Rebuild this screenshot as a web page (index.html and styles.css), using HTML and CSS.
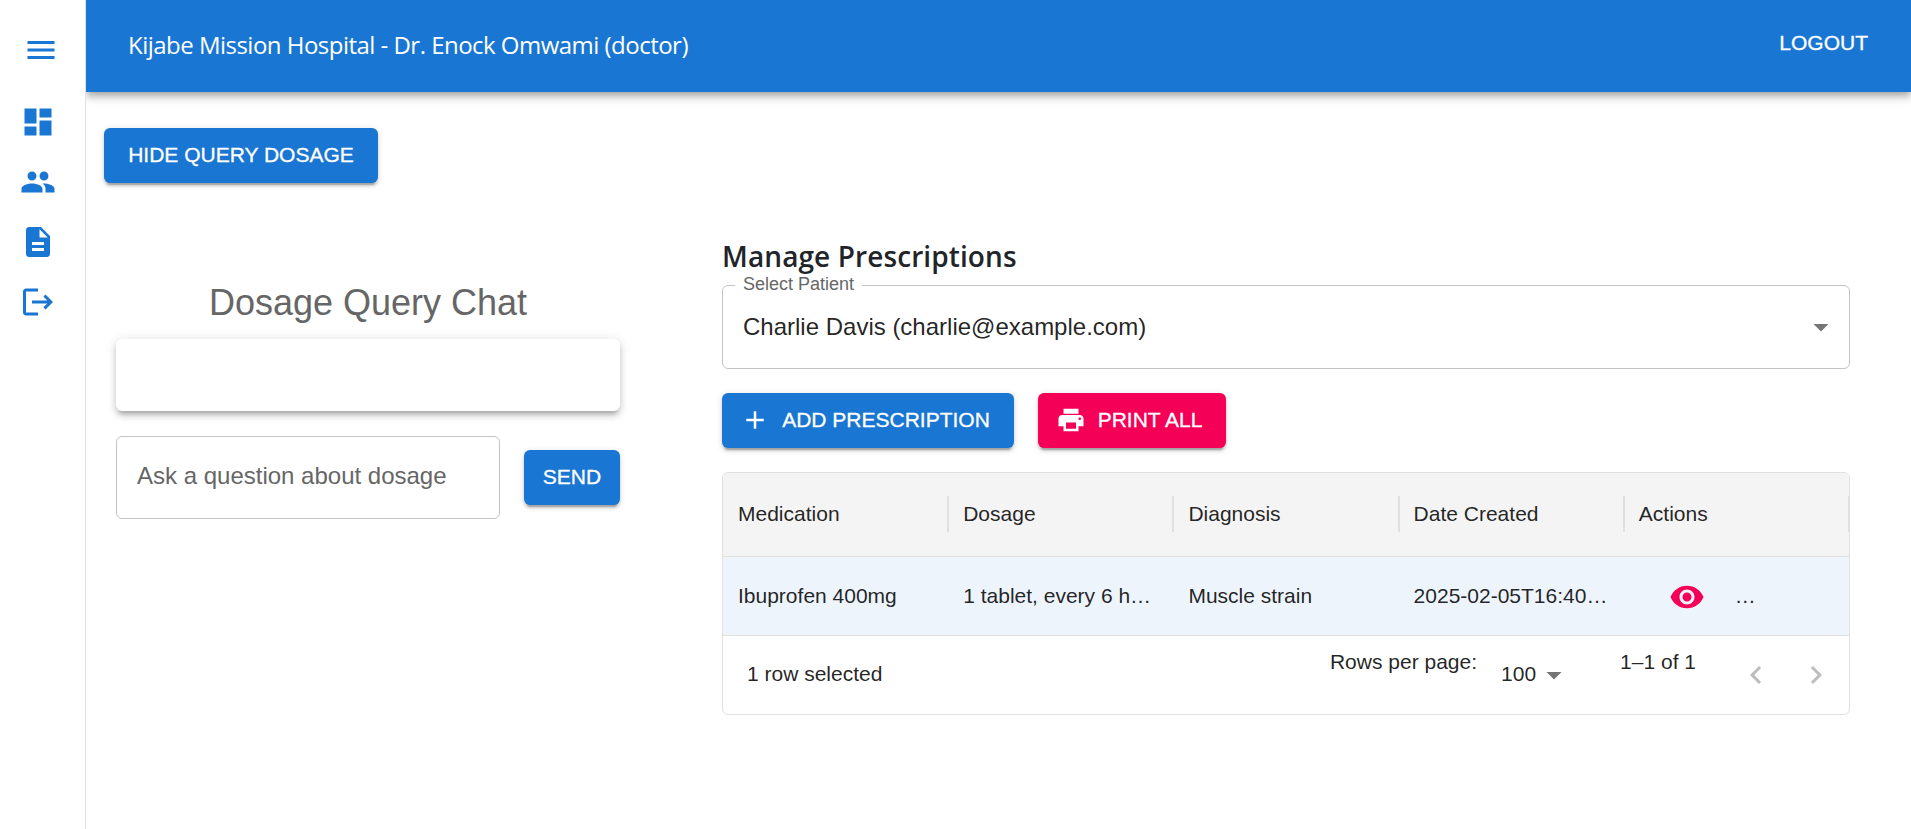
FILE: index.html
```html
<!DOCTYPE html>
<html lang="en">
<head>
<meta charset="utf-8">
<title>Manage Prescriptions</title>
<link rel="stylesheet" href="styles.css">
</head>
<body>
<div class="app">
  <nav class="sidebar">
    <svg class="icon menu" viewBox="0 0 24 24"><path d="M3 18h18v-2H3v2zm0-5h18v-2H3v2zm0-7v2h18V6H3z"/></svg>
    <svg class="icon" viewBox="0 0 24 24"><path d="M3 13h8V3H3v10zm0 8h8v-6H3v6zm10 0h8V11h-8v10zm0-18v6h8V3h-8z"/></svg>
    <svg class="icon" viewBox="0 0 24 24"><path d="M16 11c1.66 0 2.99-1.34 2.99-3S17.66 5 16 5c-1.66 0-3 1.34-3 3s1.34 3 3 3zm-8 0c1.66 0 2.99-1.34 2.99-3S9.66 5 8 5C6.34 5 5 6.34 5 8s1.34 3 3 3zm0 2c-2.33 0-7 1.17-7 3.5V19h14v-2.500c0-2.330-4.670-3.500-7-3.500zm8 0c-.29 0-.62.02-.97.05 1.160.84 1.970 1.970 1.970 3.450V19h6v-2.500c0-2.330-4.670-3.500-7-3.500z"/></svg>
    <svg class="icon" viewBox="0 0 24 24"><path d="M14 2H6c-1.100 0-1.990.9-1.990 2L4 20c0 1.100.89 2 1.990 2H18c1.100 0 2-.9 2-2V8l-6-6zm2 16H8v-2h8v2zm0-4H8v-2h8v2zm-3-5V3.500L18.500 9H13z"/></svg>
    <svg class="icon" viewBox="0 0 24 24"><path d="M17 7l-1.410 1.410L18.170 11H8v2h10.170l-2.580 2.580L17 17l5-5zM4 5h8V3H4c-1.100 0-2 .9-2 2v14c0 1.100.9 2 2 2h8v-2H4V5z"/></svg>
  </nav>
  <div class="page">
    <header class="appbar">
      <span class="title">Kijabe Mission Hospital - Dr. Enock Omwami (doctor)</span>
      <span class="logout">LOGOUT</span>
    </header>
    <main class="main">
      <button class="btn toggle"><span>HIDE QUERY DOSAGE</span></button>
      <div class="columns">
        <section class="chat">
          <h5 class="chat-title"><span>Dosage Query Chat</span></h5>
          <div class="paper"></div>
          <div class="ask">
            <div class="field"><span>Ask a question about dosage</span></div>
            <button class="btn send">SEND</button>
          </div>
        </section>
        <section class="manage">
          <h2 class="manage-title"><span>Manage Prescriptions</span></h2>
          <div class="select">
            <span class="select-label">Select Patient</span>
            <span class="select-value">Charlie Davis (charlie@example.com)</span>
            <svg class="icon grey" viewBox="0 0 24 24"><path d="M7 10l5 5 5-5z"/></svg>
          </div>
          <div class="actions">
            <button class="btn add"><svg class="bicon" viewBox="0 0 24 24"><path d="M19 13h-6v6h-2v-6H5v-2h6V5h2v6h6v2z"/></svg><span>ADD PRESCRIPTION</span></button>
            <button class="btn print"><svg class="bicon" viewBox="0 0 24 24"><path d="M19 8H5c-1.660 0-3 1.340-3 3v6h4v4h12v-4h4v-6c0-1.660-1.340-3-3-3zm-3 11H8v-5h8v5zm3-7c-.55 0-1-.45-1-1s.45-1 1-1 1 .45 1 1-.45 1-1 1zm-1-9H6v4h12V3z"/></svg><span>PRINT ALL</span></button>
          </div>
          <div class="grid">
            <div class="row head">
              <div class="cell">Medication</div>
              <div class="cell">Dosage</div>
              <div class="cell">Diagnosis</div>
              <div class="cell">Date Created</div>
              <div class="cell">Actions</div>
            </div>
            <div class="row selected">
              <div class="cell">Ibuprofen 400mg</div>
              <div class="cell">1 tablet, every 6 h…</div>
              <div class="cell">Muscle strain</div>
              <div class="cell">2025-02-05T16:40…</div>
              <div class="cell act"><svg class="icon pink" viewBox="0 0 24 24"><path d="M12 4.500C7 4.500 2.730 7.610 1 12c1.730 4.390 6 7.500 11 7.500s9.270-3.110 11-7.500c-1.730-4.390-6-7.500-11-7.500zM12 17c-2.760 0-5-2.240-5-5s2.240-5 5-5 5 2.240 5 5-2.240 5-5 5zm0-8c-1.660 0-3 1.340-3 3s1.340 3 3 3 3-1.340 3-3-1.340-3-3-3z"/></svg><span>…</span></div>
            </div>
            <div class="foot">
              <span class="count">1 row selected</span>
              <span class="raised">Rows per page:</span>
              <span class="size">100</span>
              <svg class="icon grey size-arrow" viewBox="0 0 24 24"><path d="M7 10l5 5 5-5z"/></svg>
              <span class="raised range">1–1 of 1</span>
              <svg class="icon pale prev" viewBox="0 0 24 24"><path d="M15.410 7.410L14 6l-6 6 6 6 1.410-1.410L10.830 12z"/></svg>
              <svg class="icon pale" viewBox="0 0 24 24"><path d="M10 6L8.590 7.410 13.170 12l-4.580 4.590L10 18l6-6z"/></svg>
            </div>
          </div>
        </section>
      </div>
    </main>
  </div>
</div>
</body>
</html>
```

FILE: styles.css
```css
* { box-sizing: border-box; }
body {
  margin: 0;
  background: #fff;
  color: rgba(0, 0, 0, 0.87);
  font-family: "Liberation Sans", Arial, sans-serif;
  font-size: 21px;
}
.app { display: flex; height: 829px; overflow: hidden; }
.sidebar {
  width: 86px;
  flex: none;
  border-right: 1px solid #e0e0e0;
  padding: 32px 0 0 20px;
  display: flex;
  flex-direction: column;
  gap: 24px;
}
.icon { width: 36px; height: 36px; flex: none; display: block; fill: #1976d2; }
.menu { margin: 0 0 12px 3px; }
.grey { fill: #757575; }
.pale { fill: #bdbdbd; }
.pink { fill: #f50057; margin-top: 1px; }
.page { flex: 1; min-width: 0; }
.appbar {
  height: 92px;
  background: #1976d2;
  color: #fff;
  display: flex;
  justify-content: space-between;
  padding: 0 43px 0 42px;
  box-shadow: 0 3px 6px -1.5px rgba(0,0,0,.2), 0 6px 7.5px rgba(0,0,0,.14), 0 1.5px 15px rgba(0,0,0,.12);
  clip-path: inset(0 0 -30px 0);
}
.title { font: 24px/90px "Open Sans", "Noto Sans", sans-serif; white-space: nowrap; letter-spacing: -0.52px; }
.logout { line-height: 86px; -webkit-text-stroke: 0.3px; }
.main { padding: 36px 61px 0 18px; }
.btn {
  height: 55px;
  border: 0;
  border-radius: 6px;
  background: #1976d2;
  color: #fff;
  font: 500 21px/53px "Liberation Sans", Arial, sans-serif;
  -webkit-text-stroke: 0.3px;
  padding: 0 0 2px;
  display: flex;
  align-items: center;
  justify-content: center;
  white-space: nowrap;
  box-shadow: 0 4.5px 1.5px -3px rgba(0,0,0,.2), 0 3px 3px rgba(0,0,0,.14), 0 1.5px 7.5px rgba(0,0,0,.12);
}
.toggle { width: 274px; }
.columns { display: flex; justify-content: space-between; }
.chat { width: 504px; margin: 93px 0 0 12px; }
.chat-title {
  margin: 0 0 10px;
  font-size: 36px;
  font-weight: 400;
  line-height: 53px;
  color: #666;
  text-align: center;
}
.paper {
  height: 72px;
  border-radius: 6px;
  box-shadow: 0 4.5px 4.5px -3px rgba(0,0,0,.2), 0 4.5px 6px rgba(0,0,0,.14), 0 1.5px 12px rgba(0,0,0,.12);
}
.ask { display: flex; justify-content: space-between; align-items: center; margin-top: 25px; }
.field {
  width: 384px;
  height: 83px;
  border: 1px solid #c4c4c4;
  border-radius: 6px;
  padding-left: 20px;
  font-size: 24px;
  line-height: 77px;
  color: #666;
}
.send { width: 96px; }
.manage { width: 1128px; margin-top: 54px; }
.manage-title {
  margin: 0;
  padding-bottom: 10px;
  font: 600 28px/38px "Open Sans", "Noto Sans", sans-serif;
  letter-spacing: 0.1px;
  color: #212529;
  white-space: nowrap;
}
.select {
  position: relative;
  height: 84px;
  border: 1px solid #c4c4c4;
  border-radius: 6px;
  padding: 0 10px 0 20px;
  display: flex;
  align-items: center;
  justify-content: space-between;
  font-size: 24px;
}
.select-label {
  position: absolute;
  left: 12px;
  top: -10px;
  padding: 0 8px;
  background: #fff;
  font-size: 18px;
  line-height: 16px;
  color: #666;
}
.actions { display: flex; gap: 24px; margin-top: 24px; }
.bicon { width: 30px; height: 30px; fill: #fff; margin: 0 12px 0 0; }
.add { width: 292px; padding-right: 6px; }
.print { width: 188px; background: #f50057; padding-right: 6px; }
.grid { margin-top: 24px; border: 1px solid #e0e0e0; border-radius: 6px; overflow: hidden; }
.row { display: grid; grid-template-columns: repeat(5, 1fr); border-bottom: 1px solid #e0e0e0; }
.head { height: 84px; background: #f4f4f4; align-items: center; padding-bottom: 1px; }
.head .cell { line-height: 36px; height: 36px; border-right: 2px solid #e0e0e0; margin-right: -1px; }
.selected { height: 79px; background: #edf4fc; line-height: 78px; }
.cell { padding-left: 15px; white-space: nowrap; }
.act { display: flex; align-items: center; padding-left: 45px; gap: 30px; }
.foot { height: 78px; line-height: 75px; display: flex; align-items: center; padding: 0 15px 0 24px; white-space: nowrap; }
.count, .size { padding-bottom: 4px; }
.count { margin-right: auto; }
.raised { padding-bottom: 28px; }
.size { margin-left: 24px; }
.range { margin: 0 42px 0 48px; }
.prev { margin-right: 24px; }
```
